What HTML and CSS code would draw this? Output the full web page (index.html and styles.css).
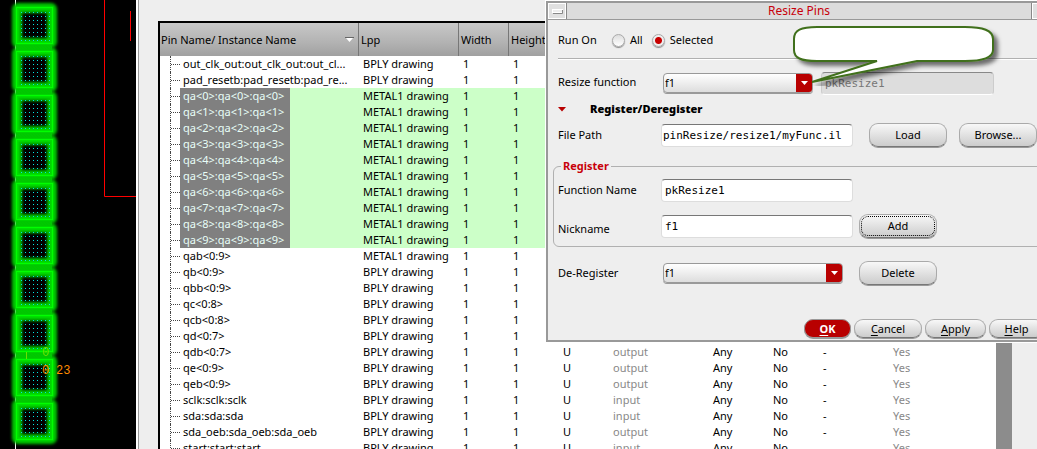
FILE: index.html
```html
<!DOCTYPE html>
<html lang="en">
<head>
<meta charset="utf-8">
<title>Resize Pins</title>
<link rel="stylesheet" href="styles.css">
</head>
<body>
<div class="desktop">
  <svg class="layout-canvas" width="136" height="449" viewBox="0 0 136 449" role="img" aria-label="Pin layout">
    <defs>
      <pattern id="dots" x="1" y="0" width="4" height="4" patternUnits="userSpaceOnUse"><rect width="1" height="1" fill="#00e5e5"/></pattern>
      <pattern id="hatch" width="3" height="3" patternUnits="userSpaceOnUse"><rect width="3" height="3" fill="#00d400"/><path d="M0 0L3 3" stroke="#00b800"/></pattern>
      <filter id="glow" x="-40%" y="-40%" width="180%" height="180%"><feGaussianBlur stdDeviation="1.500"/></filter>
      <g id="pin">
        <rect x="1" y="1" width="35" height="35" rx="1" fill="none" stroke="#00c800" stroke-width="10" filter="url(#glow)"/>
        <rect x="1" y="1" width="35" height="35" fill="none" stroke="#00e000" stroke-width="3"/>
        <rect x="0.5" y="0.5" width="36" height="36" fill="none" stroke="#00ff00"/>
      </g>
    </defs>
    <rect width="136" height="449" fill="#000"/>
    <path d="M15.500 0V449" stroke="#fff"/>
    <rect x="16" y="38" width="36" height="370" fill="url(#hatch)"/>
    <g fill="#000">
      <rect x="16" y="7" width="36" height="36"/><rect x="16" y="51" width="36" height="36"/><rect x="16" y="95" width="36" height="36"/><rect x="16" y="139" width="36" height="36"/><rect x="16" y="183" width="36" height="36"/><rect x="16" y="227" width="36" height="36"/><rect x="16" y="271" width="36" height="36"/><rect x="16" y="315" width="36" height="36"/><rect x="16" y="359" width="36" height="36"/><rect x="16" y="403" width="36" height="36"/>
    </g>
    <use href="#pin" x="16" y="7"/><use href="#pin" x="16" y="51"/><use href="#pin" x="16" y="95"/><use href="#pin" x="16" y="139"/><use href="#pin" x="16" y="183"/><use href="#pin" x="16" y="227"/><use href="#pin" x="16" y="271"/><use href="#pin" x="16" y="315"/><use href="#pin" x="16" y="359"/><use href="#pin" x="16" y="403"/>
    <g fill="url(#dots)">
      <rect x="18" y="9" width="33" height="33"/><rect x="18" y="53" width="33" height="33"/><rect x="18" y="97" width="33" height="33"/><rect x="18" y="141" width="33" height="33"/><rect x="18" y="185" width="33" height="33"/><rect x="18" y="229" width="33" height="33"/><rect x="18" y="273" width="33" height="33"/><rect x="18" y="317" width="33" height="33"/><rect x="18" y="361" width="33" height="33"/><rect x="18" y="405" width="33" height="33"/>
    </g>
    <path d="M104.500 0V196.500H136M130.500 11V41" fill="none" stroke="#f00"/>
    <path d="M26.500 352V359" stroke="#6be000"/>
    <text class="coord faint" x="42" y="356">0</text>
    <text class="coord" x="42" y="374">0</text>
    <text class="coord" x="56" y="374">23</text>
  </svg>

  <main class="pin-window">
    <div class="pin-list">
      <table class="pins">
        <colgroup><col class="c-name"><col class="c-lpp"><col class="c-num"><col class="c-num"><col class="c-u"><col class="c-dir"><col class="c-any"><col class="c-no"><col class="c-dash"><col></colgroup>
        <thead><tr><th><span class="sort">Pin Name/ Instance Name <svg width="9" height="6" viewBox="0 0 9 6"><path d="M0 .5H9" stroke="#666"/><path d="M1 1H8L4.500 5Z" fill="#fff"/></svg></span></th><th>Lpp</th><th>Width</th><th>Height</th><th></th><th></th><th></th><th></th><th></th><th></th></tr></thead>
        <tbody id="pin-rows"></tbody>
      </table>
      <div class="scrollbar"></div>
    </div>
  </main>

  <section class="dialog" aria-label="Resize Pins">
    <header class="titlebar">
      <button class="win-btn" aria-label="Window menu"><svg width="11" height="5" viewBox="0 0 11 5"><rect x=".5" y=".5" width="10" height="3" fill="#eee" stroke="#fff"/><path d="M1 4.500H10.500V1" fill="none" stroke="#888"/></svg></button>
      <h1>Resize Pins</h1>
      <button class="win-btn" aria-label="Minimize"><svg width="9" height="9" viewBox="0 0 9 9"><path d="M4.500 1L8 4.500L4.500 8L1 4.500Z" fill="#eee" stroke="#888"/></svg></button>
    </header>
    <form class="form">
      <div class="row run">
        <span class="run-label">Run On</span>
        <label class="choice"><input type="radio" name="run">All</label>
        <label class="choice"><input type="radio" name="run" checked>Selected</label>
      </div>
      <hr>
      <div class="row resize">
        <label class="name" for="rf">Resize function</label>
        <span class="combo short"><select id="rf"><option>f1</option></select><svg viewBox="0 0 16 18"><path d="M5 7H12L8.500 11Z" fill="#fff"/></svg></span>
        <input class="text dim" aria-label="Resolved function" value="pkResize1" disabled>
      </div>
      <div class="row toggle"><svg width="8" height="5" viewBox="0 0 8 5"><path d="M0 0H8L4 4.500Z" fill="#b80000"/></svg><strong>Register/Deregister</strong></div>
      <div class="row file">
        <label class="name" for="fp">File Path</label>
        <input class="text path" id="fp" value="pinResize/resize1/myFunc.il">
        <button type="button" class="btn wide-gap">Load</button>
        <button type="button" class="btn browse">Browse...</button>
      </div>
      <fieldset>
        <legend>Register</legend>
        <div class="row func"><label class="name" for="fn">Function Name</label><input class="text" id="fn" value="pkResize1"></div>
        <div class="row nick"><label class="name" for="nn">Nickname</label><input class="text" id="nn" value="f1"><button type="button" class="btn focus">Add</button></div>
      </fieldset>
      <div class="row dereg">
        <label class="name" for="dr">De-Register</label>
        <span class="combo"><select id="dr"><option>f1</option></select><svg viewBox="0 0 16 18"><path d="M5 7H12L8.500 11Z" fill="#fff"/></svg></span>
        <button type="button" class="btn wide-gap">Delete</button>
      </div>
      <footer class="actions">
        <button type="button" class="pill ok"><u>O</u>K</button>
        <button type="button" class="pill cancel"><u>C</u>ancel</button>
        <button type="button" class="pill"><u>A</u>pply</button>
        <button type="button" class="pill help"><u>H</u>elp</button>
      </footer>
    </form>
    <svg class="callout" width="220" height="66" viewBox="0 0 220 66" aria-hidden="true">
      <defs><filter id="shadow" x="-10%" y="-10%" width="125%" height="135%"><feDropShadow dx="4" dy="4" stdDeviation="2" flood-color="#000" flood-opacity=".55"/></filter></defs>
      <path d="M30 7H178C196 7 206 10 206 19V30C206 38 196 41 178 41H130L25 62L90 41H30C14 41 7 38 7 30V19C7 10 14 7 30 7Z" fill="#fff" stroke="#41701b" stroke-width="2" filter="url(#shadow)"/>
    </svg>
  </section>
</div>
<script src="pins.js"></script>
</body>
</html>
```

FILE: styles.css
```css
* { box-sizing: border-box; }
body { margin: 0; background: #eee; color: #000; font: 11px/16px "Noto Sans", "Open Sans", sans-serif; }
input, select, button { font: inherit; color: inherit; margin: 0; }
.desktop { position: relative; display: flex; height: 100vh; overflow: hidden; }
.layout-canvas { flex: none; background: #000; }
.coord { font: 12px "Liberation Mono", monospace; fill: #ff8c00; }
.faint { fill: #6be000; }
.pin-window { flex: 1; min-width: 0; padding: 21px 25px 0 20px; border-left: 2px solid #fff; background: #eee; box-shadow: inset 1px 0 #999; }
.pin-list { display: flex; height: 100%; overflow: hidden; border: solid #000; border-width: 2px 0 0 2px; background: #fff; }
.pins { flex: 1; align-self: flex-start; width: 100%; table-layout: fixed; border-collapse: collapse; }
.scrollbar { flex: none; width: 16px; background: #8c8c8c; }
.c-name { width: 199px; }
.c-lpp { width: 100px; }
.c-num { width: 50px; }
.c-u { width: 50px; }
.c-dir { width: 100px; }
.c-any { width: 60px; }
.c-no { width: 50px; }
.c-dash { width: 70px; }
.pins th { height: 33px; padding: 0 0 0 2px; font-weight: 400; text-align: left; white-space: nowrap; overflow: hidden; background: linear-gradient(#c8c8c8, #b2b2b2 60%, #a0a0a0); box-shadow: inset -1px 0 #777; }
.pins th:first-child { padding-left: 1px; }
.sort { display: flex; align-items: center; justify-content: space-between; padding-right: 5px; }
.pins td { height: 16px; padding: 0 0 0 4px; white-space: nowrap; }
.pins .pin { padding: 0; }
.tree { display: flex; }
.branch { flex: none; width: 20px; background: #fff; padding-left: 10px; }
.branch::before { content: ""; display: block; height: 16px; border-left: 1px dotted #444; background: repeating-linear-gradient(90deg, #444 0 1px, #fff 1px 2px) 0 8px / 100% 1px no-repeat; }
.label { padding: 0 3px; }
.picked td { background: #ccffc8; }
.picked .label { padding-right: 6px; background: #808080; color: #e8fff8; }
.muted { color: #888; }

.dialog { position: absolute; left: 546px; right: -14px; top: 1px; background: #eee; border: solid #999; border-width: 2px 1px 2px 2px; box-shadow: 0 0 0 1px #fff; }
.titlebar { display: flex; height: 17px; background: #dcdcdc; border-bottom: 1px solid #999; }
.titlebar h1 { flex: 1; margin: 0; color: #c8000a; font-size: 12px; line-height: 16px; font-weight: 400; text-align: center; border: solid #888; border-width: 0 1px; }
.win-btn { width: 18px; padding: 0; border: 1px solid #fff; background: #e0e0e0; display: flex; align-items: center; justify-content: center; }
.form { padding: 0 4px 2px 5px; }
.row { display: flex; align-items: center; padding-left: 5px; }
.name { flex: none; width: 103px; }
.run { height: 38px; padding-top: 2px; }
.run-label { width: 54px; }
.choice { display: flex; align-items: center; gap: 5px; margin-right: 9px; }
.choice input { appearance: none; width: 13px; height: 13px; border: 1px solid #aaa; border-radius: 50%; background: linear-gradient(#ddd, #fff); box-shadow: 0 1px 1px #888; }
.choice input:checked { background: radial-gradient(circle, #c80000 3px, #eee 4px); }
hr { height: 2px; margin: 0 0 4px 5px; border: solid; border-width: 1px 0; border-color: #b0b0b0 #fff #fff; }
.resize { height: 38px; }
.resize .name { padding-bottom: 2px; }
.combo { position: relative; display: flex; width: 180px; height: 20px; margin-left: 2px; border: 1px solid #999; border-radius: 4px; background: linear-gradient(#fff, #ddd); overflow: hidden; box-shadow: 0 1px #999; }
.combo.short { width: 150px; }
.combo select { appearance: none; width: 100%; padding: 0 18px 0 1px; border: 0; background: none; }
.combo svg { position: absolute; right: 0; top: 0; width: 16px; height: 18px; background: #b80000; pointer-events: none; }
.text { width: 192px; height: 23px; padding: 0 3px; border: 1px solid #ddd; border-top: 1px solid #777; border-radius: 4px; background: #fff; font: 11px "DejaVu Sans Mono", monospace; }
.text.path { padding: 0 0 0 1px; }
.text.dim { width: 173px; margin-left: 8px; background: #ddd; color: #777; border-color: #888 #ccc #fff; }
.toggle { height: 14px; gap: 24px; font-weight: 700; }
.file { height: 38px; margin-bottom: 4px; }
.btn { width: 78px; height: 24px; padding: 0; border: 1px solid #aaa; border-bottom-color: #777; border-radius: 9px; background: linear-gradient(#f8f8f8, #ddd 60%, #ccc); box-shadow: 0 1px #999; }
.wide-gap { margin-left: 16px; }
.browse { margin-left: 12px; }
.focus { margin-left: 6px; outline: 1px dotted #000; outline-offset: -3px; }
fieldset { min-width: 0; margin: 0; padding: 0; border: 1px solid #b0b0b0; border-radius: 6px; }
legend { margin-left: 7px; padding: 0 2px; color: #c8000a; font-weight: 700; }
fieldset .row { padding-left: 4px; }
.func { height: 32px; }
.nick { height: 40px; }
.nick .name { padding-top: 6px; }
.dereg { height: 42px; margin-top: 5px; }
.actions { display: flex; justify-content: flex-end; gap: 3px; padding: 25px 2px 0 0; }
.pill { width: 61px; height: 19px; padding: 0; line-height: 16px; border: 1px solid #aaa; border-bottom-color: #777; border-radius: 9px; background: linear-gradient(#f8f8f8, #ddd 60%, #ccc); box-shadow: 0 1px #999; }
.pill u { text-underline-offset: 2px; }
.ok { width: 47px; background: #b80000; color: #fff; font-weight: 700; border-color: #999; }
.cancel { width: 68px; }
.help { width: 55px; }
.callout { position: absolute; left: 239px; top: 17px; pointer-events: none; }
```

FILE: pins.js
```js
const bply = "BPLY drawing", metal = "METAL1 drawing";
// Pins without a direction list only their layer and size.
const pins = [
  ["out_clk_out:out_clk_out:out_cl...", bply],
  ["pad_resetb:pad_resetb:pad_re...", bply],
  ...Array.from({ length: 10 }, (_, i) => [`qa<${i}>:qa<${i}>:qa<${i}>`, metal, "", true]),
  ["qab<0:9>", metal], ["qb<0:9>", bply], ["qbb<0:9>", bply],
  ["qc<0:8>", bply], ["qcb<0:8>", bply], ["qd<0:7>", bply],
  ["qdb<0:7>", bply, "output"], ["qe<0:9>", bply, "output"], ["qeb<0:9>", bply, "output"],
  ["sclk:sclk:sclk", bply, "input"], ["sda:sda:sda", bply, "input"],
  ["sda_oeb:sda_oeb:sda_oeb", bply, "output"], ["start:start:start", bply, "input"]
];
const body = document.getElementById("pin-rows");
for (const [name, lpp, dir, picked] of pins) {
  const tr = body.insertRow();
  if (picked) tr.className = "picked";
  const first = tr.insertCell();
  first.className = "pin";
  first.innerHTML = '<div class="tree"><span class="branch"></span><span class="label"></span></div>';
  first.querySelector(".label").textContent = name;
  const details = dir ? ["U", dir, "Any", "No", "-", "Yes"] : ["", "", "", "", "", ""];
  for (const value of [lpp, "1", "1", ...details]) {
    const td = tr.insertCell();
    td.textContent = value;
    if (value && (value === dir || value === "Yes")) td.className = "muted";
  }
}
```
